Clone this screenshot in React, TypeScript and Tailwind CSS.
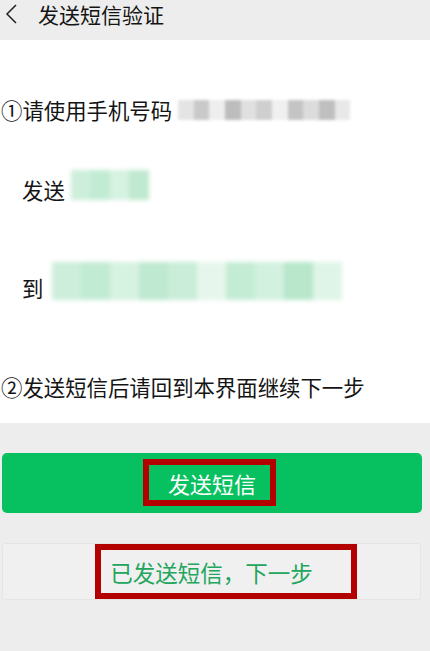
export default function App() {
  const greys = ['#e4e4e4', '#c9c9c9', '#eeeeee', '#bdbdbd', '#e0e0e0', '#cfcfcf', '#f0f0f0', '#c4c4c4', '#dcdcdc', '#bfbfbf', '#e8e8e8'];
  const greens = ['#cdeedb', '#c2ebd3', '#d6f2e1', '#bfe9d0', '#c9edd8', '#e6f6ec', '#c4ecd5', '#d2f1df', '#b8e7cb', '#dff5e7'];
  return (
    <div className="w-[430px] h-[651px] bg-[#ededed] flex flex-col overflow-hidden font-['Noto_Sans_CJK_SC',sans-serif] text-[#141414]">
      {/* Header */}
      <div className="h-[40px] flex items-start shrink-0">
        <svg width="14" height="22" viewBox="0 0 14 22" className="ml-[4px] mt-[3px]">
          <polyline points="12,2 3,11 12,20" fill="none" stroke="#222" strokeWidth="1.5" />
        </svg>
        <span className="ml-[20px] mt-[1px] text-[21px] leading-[26px]">发送短信验证</span>
      </div>

      {/* Content */}
      <div className="h-[383px] bg-white flex flex-col shrink-0">
        <div className="mt-[58px] h-[24px] flex items-center pl-[1px]">
          <span className="text-[21.4px] leading-[24px]">①请使用手机号码</span>
          <div className="ml-[6px] h-[20px] w-[172px] flex blur-[1.5px]">
            {greys.map((c, i) => (
              <div key={i} className="flex-1 h-full" style={{ backgroundColor: c }} />
            ))}
          </div>
        </div>

        <div className="mt-[48px] h-[32px] flex items-end pl-[22px]">
          <span className="text-[21.4px] leading-[24px]">发送</span>
          <div className="ml-[6px] self-start h-[30px] w-[78px] flex blur-[2px]">
            {greens.slice(0, 4).map((c, i) => (
              <div key={i} className="flex-1 h-full" style={{ backgroundColor: c }} />
            ))}
          </div>
        </div>

        <div className="mt-[60px] h-[38px] flex items-end pl-[22px]">
          <span className="text-[21.4px] leading-[24px]">到</span>
          <div className="ml-[9px] self-start h-[38px] w-[290px] flex blur-[2px]">
            {greens.map((c, i) => (
              <div key={i} className="flex-1 h-full" style={{ backgroundColor: c }} />
            ))}
          </div>
        </div>

        <div className="mt-[75px] h-[24px] pl-[1px]">
          <span className="text-[21.4px] leading-[24px]">②发送短信后请回到本界面继续下一步</span>
        </div>
      </div>

      {/* Buttons */}
      <div className="flex flex-col pl-[2px] pr-[8px]">
        <div className="relative mt-[30px] h-[60px] rounded-[5px] bg-[#07c160] flex items-center justify-center">
          <span className="text-[22px] leading-[28px] text-white">发送短信</span>
          <div className="absolute left-[141px] top-[6px] w-[133px] h-[47px] border-[6px] border-[#b30000]" />
        </div>
        <div className="relative mt-[30px] h-[57px] mr-[1px] rounded-[3px] bg-[#f0f0f0] border border-[#e5e5e5] flex items-center justify-center">
          <span className="text-[22.5px] leading-[28px] text-[#22a55c]">已发送短信，下一步</span>
          <div className="absolute left-[92px] top-0 w-[262px] h-[55px] border-[6px] border-[#b30000]" />
        </div>
      </div>
    </div>
  );
}
